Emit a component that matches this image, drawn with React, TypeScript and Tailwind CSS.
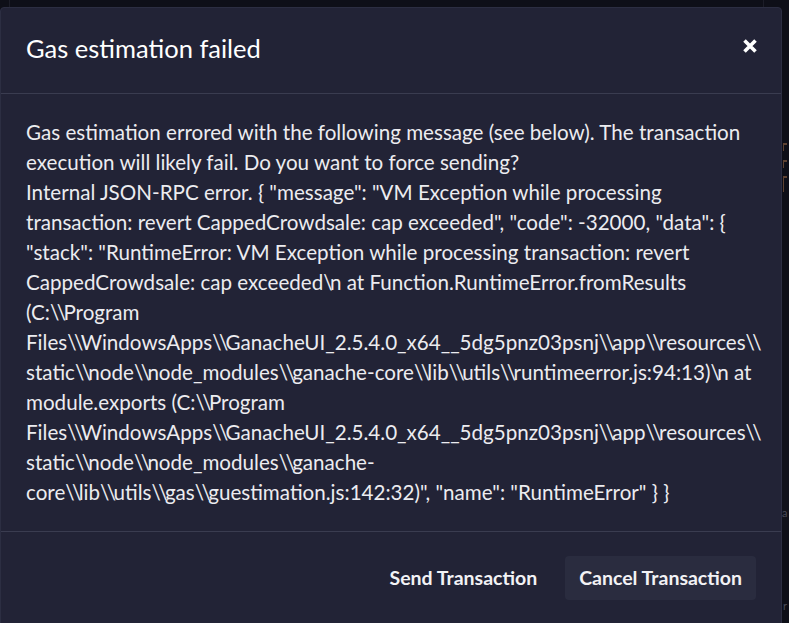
import React from "react";

const lines = [
  'Gas estimation errored with the following message (see below). The transaction',
  'execution will likely fail. Do you want to force sending?',
  'Internal JSON-RPC error. { "message": "VM Exception while processing',
  'transaction: revert CappedCrowdsale: cap exceeded", "code": -32000, "data": {',
  '"stack": "RuntimeError: VM Exception while processing transaction: revert',
  'CappedCrowdsale: cap exceeded\\n at Function.RuntimeError.fromResults',
  '(C:\\\\Program',
  'Files\\\\WindowsApps\\\\GanacheUI_2.5.4.0_x64__5dg5pnz03psnj\\\\app\\\\resources\\\\',
  'static\\\\node\\\\node_modules\\\\ganache-core\\\\lib\\\\utils\\\\runtimeerror.js:94:13)\\n at',
  'module.exports (C:\\\\Program',
  'Files\\\\WindowsApps\\\\GanacheUI_2.5.4.0_x64__5dg5pnz03psnj\\\\app\\\\resources\\\\',
  'static\\\\node\\\\node_modules\\\\ganache-',
  'core\\\\lib\\\\utils\\\\gas\\\\guestimation.js:142:32)", "name": "RuntimeError" } }',
];

function Line({ text }: { text: string }) {
  const parts = text.split("\\");
  return (
    <div>
      {parts.map((p, i) => (
        <React.Fragment key={i}>
          {p}
          {i < parts.length - 1 && <span className="tracking-[-2.6px]">\</span>}
        </React.Fragment>
      ))}
    </div>
  );
}

export default function App() {
  return (
    <div className="flex w-[789px] h-[623px] overflow-hidden bg-[#0e0f18] font-['Lato',sans-serif]">
      <div className="flex flex-col w-[782px] shrink-0">
        {/* editor glimpse above the dialog */}
        <div className="h-[7px] shrink-0 flex justify-between pl-[9px] pr-[18px]">
          <div className="w-px h-full bg-[#1c1d28]" />
          <div className="w-px h-full bg-[#1c1d28]" />
        </div>

        <div className="h-[640px] shrink-0 rounded-[4px] border border-[#2c2e42] bg-[#222336] flex flex-col">
          <div className="h-[86px] shrink-0 flex items-start justify-between pl-[25px] pr-[23px] pt-[24px] border-b border-[#3a3c50]">
            <h1 className="text-[25.5px] leading-[32px] font-normal text-white">Gas estimation failed</h1>
            <svg width="16" height="16" viewBox="0 0 16 16" className="mt-[6px]">
              <path d="M2.5 2.5 L13.5 13.5 M13.5 2.5 L2.5 13.5" stroke="#ffffff" strokeWidth="3.6" strokeLinecap="butt" />
            </svg>
          </div>
          <div className="px-[25px] pt-[23px] pb-[24px] text-[20.6px] leading-[30px] text-[#ececf0] whitespace-nowrap">
            {lines.map((l, i) => (
              <Line key={i} text={l} />
            ))}
          </div>
          <div className="border-t border-[#3a3c50] pt-[24px] pr-[25px] flex justify-end gap-[14px]">
            <button className="h-[44px] px-[14px] rounded-[4px] text-[19.5px] font-bold text-[#f2f2f5]">Send Transaction</button>
            <button className="h-[44px] px-[14px] rounded-[4px] bg-[#2a2c3f] text-[19.5px] font-bold text-[#f2f2f5]">Cancel Transaction</button>
          </div>
        </div>
      </div>

      {/* editor glimpse to the right of the dialog */}
      <div className="flex flex-col w-[7px] shrink-0 pt-[143px] pl-px">
        <div className="h-[8px] w-[4px] border-l border-t-2 border-[#5e4232]" />
        <div className="mt-[9px] h-[8px] w-[4px] border-l border-t-2 border-[#5e4232]" />
        <div className="mt-[8px] h-[16px] w-[4px] border-l border-t-2 border-[#5e4232]" />
        <div className="mt-[138px] h-[200px] -ml-px bg-[#11121b] flex flex-col justify-end pb-[11px]">
          <span className="text-[11px] leading-[12px] text-[#4a4b58]">a</span>
        </div>
        <span className="mt-[70px] text-[11px] leading-[12px] text-[#4a4b58]">r</span>
      </div>
    </div>
  );
}
